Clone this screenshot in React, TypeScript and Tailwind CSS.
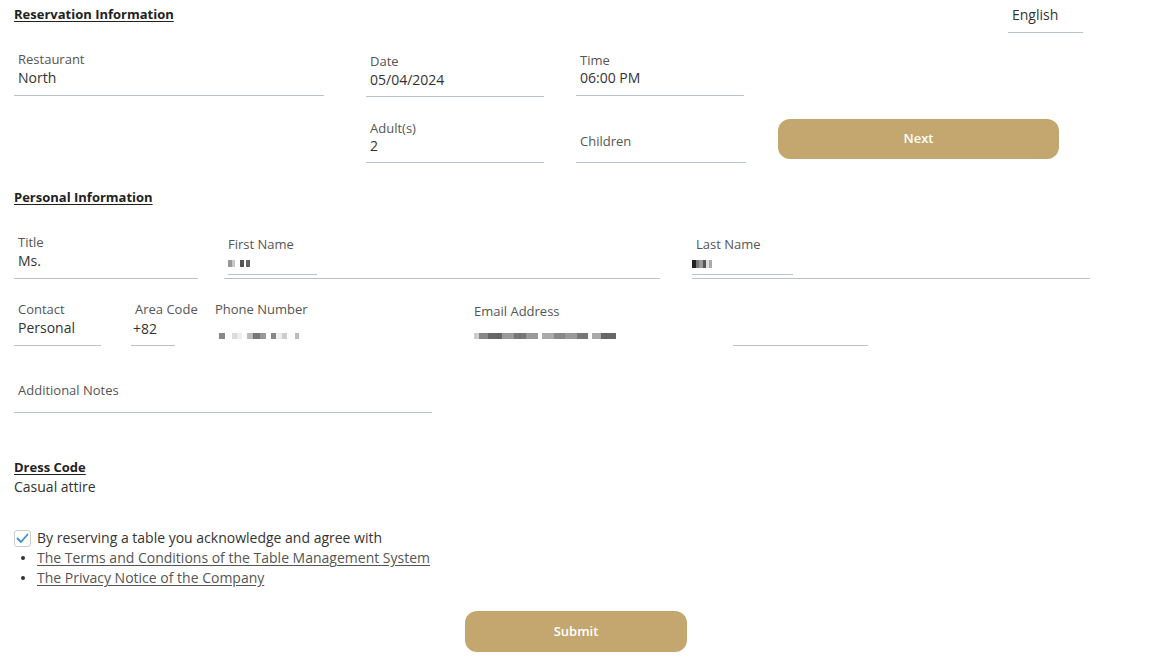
import React from "react";

const font = { fontFamily: '"Open Sans", "Lato", "Liberation Sans", sans-serif' };

function Blur({ cells, h = 6 }: { cells: [number, string][]; h?: number }) {
  return (
    <span className="inline-flex items-end">
      {cells.map(([w, c], i) => (
        <span key={i} className="inline-block" style={{ width: w, height: h, background: c }} />
      ))}
    </span>
  );
}

function Label({ children, className = "" }: { children: React.ReactNode; className?: string }) {
  return <div className={"text-[13px] leading-[16px] text-[#555] whitespace-nowrap " + className}>{children}</div>;
}
function Value({ children, className = "" }: { children: React.ReactNode; className?: string }) {
  return <div className={"text-[14px] leading-[18px] text-[#333] whitespace-nowrap " + className}>{children}</div>;
}

const H = "text-[13px] leading-[16px] font-bold text-[#222] underline underline-offset-2";

export default function App() {
  return (
    <div className="w-[1157px] h-[656px] bg-white overflow-hidden" style={font}>
      <div className="w-[1090px] pl-[14px]">
        {/* Heading row */}
        <div className="flex items-start justify-between">
          <div className={"mt-[6px] " + H}>Reservation Information</div>
          <div className="mr-[7px] w-[75px] pt-[7px] pb-[9px] pl-[4px] border-b border-[#b9c3cf] text-[14px] leading-[16px] text-[#333]">
            English
          </div>
        </div>

        {/* Row 1 */}
        <div className="flex items-start mt-[18px]">
          <div className="w-[310px] pl-[4px] pb-[8px] border-b border-[#b9c3cf]">
            <Label>Restaurant</Label>
            <Value className="mt-[2px]">North</Value>
          </div>
          <div className="ml-[42px] mt-[2px] w-[178px] pl-[4px] pb-[7px] border-b border-[#b9c3cf]">
            <Label>Date</Label>
            <Value className="mt-[2px]">05/04/2024</Value>
          </div>
          <div className="ml-[32px] mt-[1px] w-[168px] pl-[4px] pb-[8px] border-b border-[#b9c3cf]">
            <Label>Time</Label>
            <Value className="mt-[1px]">06:00 PM</Value>
          </div>
        </div>

        {/* Row 2 */}
        <div className="flex items-start mt-[23px] pl-[352px]">
          <div className="w-[178px] pl-[4px] pb-[7px] border-b border-[#b9c3cf]">
            <Label>Adult(s)</Label>
            <Value className="mt-[1px]">2</Value>
          </div>
          <div className="ml-[32px] mt-[13px] w-[170px] pl-[4px] pb-[13px] border-b border-[#b9c3cf]">
            <Label>Children</Label>
          </div>
          <button className="ml-[32px] -mt-[1px] w-[281px] h-[40px] rounded-[12px] bg-[#c4a76e] text-white text-[13px] font-semibold">
            Next
          </button>
        </div>

        {/* Personal Information */}
        <div className={"mt-[26px] " + H}>Personal Information</div>

        {/* Row 3 */}
        <div className="flex items-start mt-[29px]">
          <div className="w-[184px] pl-[4px] pb-[8px] border-b border-[#b9c3cf]">
            <Label>Title</Label>
            <Value className="mt-[2px]">Ms.</Value>
          </div>
          <div className="ml-[26px] mt-[2px] w-[436px] pb-[3px] border-b border-[#b9c3cf]">
            <Label className="pl-[4px]">First Name</Label>
            <div className="ml-[4px] w-[89px] h-[22px] mt-[1px] border-b border-[#b9c3cf] flex items-center">
              <Blur
                h={7}
                cells={[
                  [4, "#999"],
                  [3, "#c8c8c8"],
                  [5, "#fff"],
                  [4, "#555"],
                  [2, "#fff"],
                  [4, "#666"],
                ]}
              />
            </div>
          </div>
          <div className="ml-[32px] mt-[2px] w-[398px] pb-[3px] border-b border-[#b9c3cf]">
            <Label className="pl-[4px]">Last Name</Label>
            <div className="w-[101px] h-[22px] mt-[1px] border-b border-[#b9c3cf] flex items-center">
              <Blur
                h={8}
                cells={[
                  [4, "#222"],
                  [3, "#777"],
                  [4, "#999"],
                  [3, "#555"],
                  [3, "#ddd"],
                  [3, "#aaa"],
                ]}
              />
            </div>
          </div>
        </div>

        {/* Row 4 */}
        <div className="flex items-start mt-[22px]">
          <div className="w-[87px] pl-[4px] pb-[8px] border-b border-[#b9c3cf]">
            <Label>Contact</Label>
            <Value className="mt-[2px]">Personal</Value>
          </div>
          <div className="ml-[30px] w-[44px] pb-[7px] border-b border-[#b9c3cf]">
            <Label className="pl-[4px]">Area Code</Label>
            <Value className="mt-[3px] pl-[2px]">+82</Value>
          </div>
          <div className="ml-[40px] w-[200px]">
            <Label>Phone Number</Label>
            <div className="mt-[4px] pl-[4px]">
              <Blur
                h={6}
                cells={[
                  [6, "#888"],
                  [7, "#fff"],
                  [5, "#ddd"],
                  [5, "#eee"],
                  [5, "#fff"],
                  [6, "#bbb"],
                  [7, "#777"],
                  [6, "#999"],
                  [5, "#fff"],
                  [5, "#888"],
                  [6, "#eee"],
                  [5, "#ccc"],
                  [8, "#fff"],
                  [4, "#bbb"],
                ]}
              />
            </div>
          </div>
          <div className="ml-[59px] mt-[2px] w-[200px]">
            <Label>Email Address</Label>
            <div className="mt-[2px]">
              <Blur
                h={6}
                cells={[
                  [5, "#ccc"],
                  [9, "#888"],
                  [14, "#666"],
                  [12, "#999"],
                  [12, "#777"],
                  [12, "#999"],
                  [4, "#fff"],
                  [12, "#aaa"],
                  [11, "#888"],
                  [12, "#999"],
                  [11, "#777"],
                  [4, "#fff"],
                  [9, "#aaa"],
                  [15, "#666"],
                ]}
              />
            </div>
          </div>
          <div className="ml-[59px] mt-[44px] w-[135px] border-b border-[#b9c3cf]" />
        </div>

        {/* Additional Notes */}
        <div className="mt-[36px] w-[418px] pl-[4px] pb-[14px] border-b border-[#b9c3cf]">
          <Label>Additional Notes</Label>
        </div>

        {/* Dress Code */}
        <div className={"mt-[46px] " + H}>Dress Code</div>
        <div className="mt-[3px] text-[14px] leading-[18px] text-[#333]">Casual attire</div>

        {/* Agreement */}
        <div className="mt-[33px] flex items-center">
          <div className="w-[17px] h-[17px] rounded-[3px] border border-[#ccc] bg-white flex items-center justify-center">
            <svg width="13" height="11" viewBox="0 0 13 11" fill="none">
              <path d="M1.5 5.5 L5 9 L11.5 1.5" stroke="#3f8fd6" strokeWidth="1.8" strokeLinecap="round" strokeLinejoin="round" />
            </svg>
          </div>
          <span className="ml-[6px] text-[14px] leading-[18px] text-[#333]">
            By reserving a table you acknowledge and agree with
          </span>
        </div>
        <ul className="mt-[1px] text-[14px] leading-[20px] text-[#555]">
          <li className="flex items-center">
            <span className="ml-[7px] w-[4px] h-[4px] rounded-full bg-[#333]" />
            <span className="ml-[12px] underline underline-offset-2">The Terms and Conditions of the Table Management System</span>
          </li>
          <li className="flex items-center">
            <span className="ml-[7px] w-[4px] h-[4px] rounded-full bg-[#333]" />
            <span className="ml-[12px] underline underline-offset-2">The Privacy Notice of the Company</span>
          </li>
        </ul>

        <button className="mt-[23px] ml-[451px] w-[222px] h-[41px] rounded-[12px] bg-[#c4a76e] text-white text-[13px] font-semibold">
          Submit
        </button>
      </div>
    </div>
  );
}
